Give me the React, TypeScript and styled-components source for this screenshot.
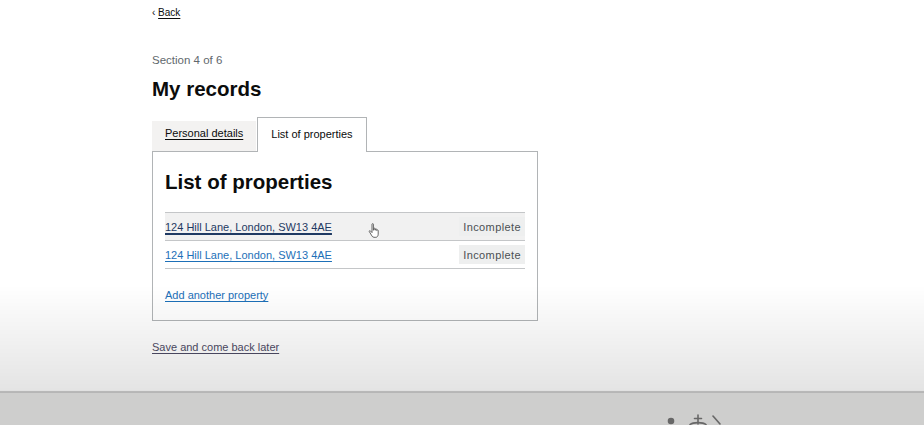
import React from 'react';
import styled, { createGlobalStyle } from 'styled-components';

const GlobalStyle = createGlobalStyle`
  html, body {
    margin: 0;
    padding: 0;
    height: 425px;
    overflow: hidden;
    background: #ffffff;
    font-family: "Liberation Sans", Arial, sans-serif;
    color: #0b0c0c;
  }
  /* the screenshot has a soft dark fade towards the bottom */
  body::after {
    content: '';
    position: fixed;
    inset: 0;
    pointer-events: none;
    background: linear-gradient(
      to bottom,
      rgba(0, 0, 0, 0) 0,
      rgba(0, 0, 0, 0) 285px,
      rgba(0, 0, 0, 0.105) 390px,
      rgba(0, 0, 0, 0.15) 392px,
      rgba(0, 0, 0, 0.15) 425px
    );
  }
`;

const Page = styled.div`
  height: 425px;
  display: flex;
  flex-direction: column;
  overflow: hidden;
`;

const Main = styled.main`
  height: 391px;
  flex-shrink: 0;
`;

const Container = styled.div`
  width: 620px;
  margin: 0 auto;
`;

const BackLink = styled.a`
  display: inline-block;
  margin-top: 6px;
  font-size: 10px;
  line-height: 14px;
  color: #0b0c0c;
  text-decoration: none;

  span {
    text-decoration: underline;
    text-underline-offset: 2px;
  }
`;

const Caption = styled.p`
  margin: 32px 0 0;
  font-size: 11.5px;
  line-height: 16px;
  color: #5f686d;
`;

const Title = styled.h1`
  margin: 8px 0 0;
  font-size: 20.5px;
  line-height: 26px;
  font-weight: 700;
`;

const TabList = styled.div`
  display: flex;
  align-items: flex-end;
  margin-top: 15px;
  position: relative;
  z-index: 1;
`;

const Tab = styled.a<{ $selected?: boolean }>`
  box-sizing: border-box;
  display: block;
  padding: 0 13px;
  margin-right: 1px;
  font-size: 11px;
  line-height: 18px;
  color: #0b0c0c;
  height: ${(p) => (p.$selected ? '35px' : '30px')};
  padding-top: ${(p) => (p.$selected ? '7px' : '3px')};
  background: ${(p) => (p.$selected ? '#ffffff' : '#f3f2f1')};
  border: ${(p) => (p.$selected ? '1px solid #b1b4b6' : 'none')};
  border-bottom: none;
  margin-bottom: ${(p) => (p.$selected ? '-1px' : '0')};
  text-decoration: ${(p) => (p.$selected ? 'none' : 'underline')};
  text-underline-offset: 2px;
`;

const Panel = styled.section`
  box-sizing: border-box;
  width: 386px;
  border: 1px solid #b1b4b6;
  padding: 17px 12px 17px;
  background: #ffffff;
`;

const PanelHeading = styled.h2`
  margin: 0;
  font-size: 20.5px;
  line-height: 26px;
  font-weight: 700;
`;

const SummaryList = styled.ul`
  list-style: none;
  margin: 17px 0 0;
  padding: 0;
  border-top: 1px solid #c4c6c8;
`;

const SummaryRow = styled.li<{ $hover?: boolean }>`
  position: relative;
  box-sizing: border-box;
  height: 28px;
  display: flex;
  align-items: center;
  justify-content: space-between;
  border-bottom: 1px solid #c4c6c8;
  background: ${(p) => (p.$hover ? '#f1f1f1' : 'transparent')};
`;

const PropertyLink = styled.a<{ $hover?: boolean }>`
  font-size: 11px;
  line-height: 16px;
  color: ${(p) => (p.$hover ? '#1f3a63' : '#1d70b8')};
  text-decoration: underline;
  text-decoration-thickness: ${(p) => (p.$hover ? '2px' : '1px')};
  text-underline-offset: 2px;
`;

const Tag = styled.span`
  display: inline-block;
  padding: 2px 4px 1px;
  font-size: 11px;
  line-height: 16px;
  letter-spacing: 0.4px;
  color: #4b5053;
  background: #eeefef;
`;

const Cursor = styled.svg`
  position: absolute;
  left: 203px;
  top: 10px;
  width: 12px;
  height: 16px;
`;

const AddLink = styled.a`
  display: inline-block;
  margin-top: 18px;
  font-size: 11px;
  line-height: 16px;
  color: #1d70b8;
  text-decoration: underline;
  text-underline-offset: 2px;
`;

const SaveLink = styled.a`
  display: inline-block;
  margin-top: 18px;
  font-size: 11px;
  line-height: 16px;
  color: #4e4c66;
  text-decoration: underline;
  text-underline-offset: 2px;
`;

const Footer = styled.footer`
  flex: 1;
  background: #f3f2f1;
  border-top: 2px solid #d6d6d6;
`;

const FooterInner = styled.div`
  width: 620px;
  margin: 0 auto;
  padding-top: 21px;
  display: flex;
  justify-content: flex-end;
`;

const Crest = styled.svg`
  width: 62px;
  height: 11px;
  margin-right: 50px;
`;

const properties = [
  { address: '124 Hill Lane, London, SW13 4AE', status: 'Incomplete', hover: true },
  { address: '124 Hill Lane, London, SW13 4AE', status: 'Incomplete', hover: false },
];

const HandCursor: React.FC = () => (
  <Cursor viewBox="0 0 12 16">
    <path
      d="M4 1.2c0-.7 1.4-.7 1.4 0v6l.4-.1V5.6c0-.6 1.3-.6 1.3 0v1.6l.3-.1V6.3c0-.6 1.3-.6 1.3 0v1.2l.2-.1c0-.6 1.3-.6 1.3 0v3.8c0 1.6-.9 3.1-2.3 3.1H6c-1 0-1.6-.6-2.1-1.4L1.3 8.6c-.4-.7.5-1.3 1.1-.7L4 9.6z"
      fill="#ffffff"
      stroke="#555"
      strokeWidth="0.9"
      strokeLinejoin="round"
    />
  </Cursor>
);

const App: React.FC = () => {
  return (
    <Page>
      <GlobalStyle />
      <Main>
        <Container>
          <BackLink href="#">
            ‹ <span>Back</span>
          </BackLink>
          <Caption>Section 4 of 6</Caption>
          <Title>My records</Title>

          <TabList>
            <Tab href="#">Personal details</Tab>
            <Tab href="#" $selected>
              List of properties
            </Tab>
          </TabList>
          <Panel>
            <PanelHeading>List of properties</PanelHeading>
            <SummaryList>
              {properties.map((p, i) => (
                <SummaryRow key={i} $hover={p.hover}>
                  <PropertyLink href="#" $hover={p.hover}>
                    {p.address}
                  </PropertyLink>
                  <Tag>{p.status}</Tag>
                  {p.hover && <HandCursor />}
                </SummaryRow>
              ))}
            </SummaryList>
            <AddLink href="#">Add another property</AddLink>
          </Panel>

          <SaveLink href="#">Save and come back later</SaveLink>
        </Container>
      </Main>
      <Footer>
        <FooterInner>
          <Crest viewBox="0 0 62 11">
            <g fill="none" stroke="#7a7a7a" strokeWidth="1.6" strokeLinecap="round">
              <circle cx="11" cy="7" r="2.5" fill="#7a7a7a" />
              <path d="M38 1v9M34.5 4.5h7" />
              <path d="M30 10.5c3-2.5 13-2.5 16 0" />
              <path d="M53 2l7 8" />
            </g>
          </Crest>
        </FooterInner>
      </Footer>
    </Page>
  );
};

export default App;
